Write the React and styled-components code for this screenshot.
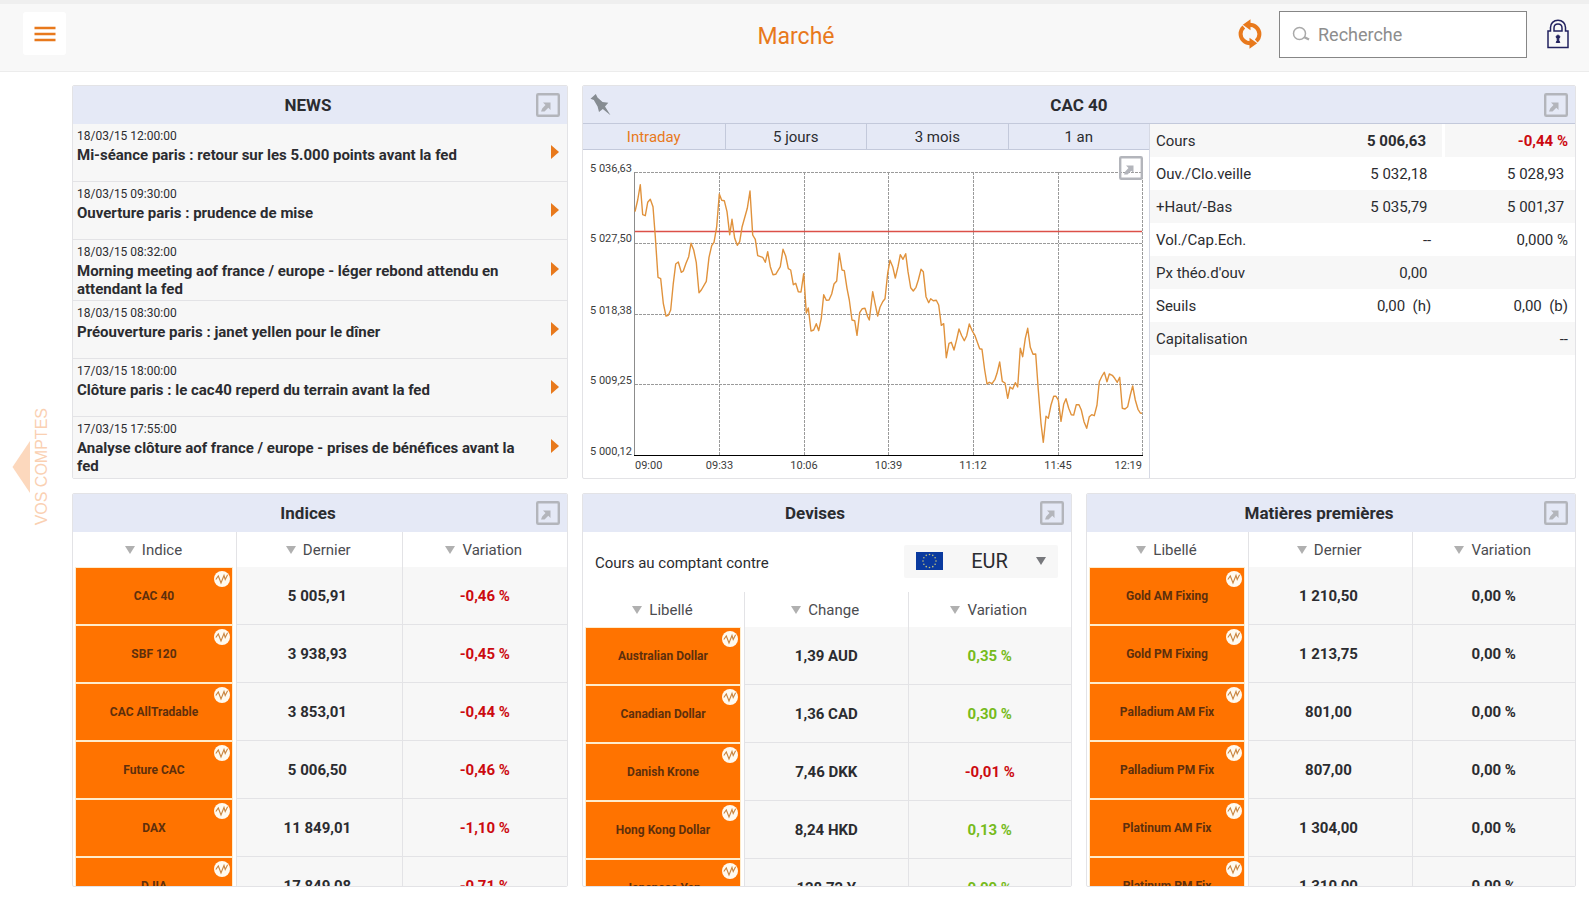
import React, { useState } from "react";
import styled, { createGlobalStyle } from "styled-components";

const GlobalStyle = createGlobalStyle`
  *, *::before, *::after { box-sizing: border-box; }
  html, body { margin: 0; padding: 0; background: #fff; }
  body, button, input, select, table { font-family: Roboto, "Liberation Sans", sans-serif; }
  button { border: 0; padding: 0; background: none; cursor: pointer; }
`;

const c = {
  orange: "#e8791c",
  tile: "#ff7300",
  head: "#e5e9f6",
  headLine: "#c3c9db",
  line: "#e3e3e6",
  soft: "#f7f7f7",
  text: "#2b2c30",
  up: "#76bb1c",
  down: "#cc0a10",
};

/* ---------- page frame ---------- */

const Page = styled.div`
  display: flex;
  flex-direction: column;
  height: 100vh;
  min-height: 640px;
  color: ${c.text};
`;

const TopBar = styled.header`
  display: grid;
  grid-template-columns: 1fr auto 1fr;
  align-items: center;
  flex: none;
  height: 72px;
  padding: 0 20px 4px 23px;
  background: #f8f8f8;
  border-top: 4px solid #efefef;
  border-bottom: 1px solid #ececec;
`;

const MenuButton = styled.button`
  display: grid;
  place-items: center;
  width: 43px;
  height: 43px;
  margin-bottom: 4px;
  background: #fff;
  border-radius: 3px;
`;

const PageTitle = styled.h1`
  margin: 0;
  padding-top: 2px;
  font-size: 23px;
  line-height: 28px;
  font-weight: 400;
  color: ${c.orange};
`;

const Tools = styled.div`
  display: flex;
  justify-content: flex-end;
  align-items: center;
  gap: 17px;
  margin-bottom: 3px;
`;

const IconButton = styled.button`
  display: grid;
  place-items: center;
  flex: none;
`;

const SearchBox = styled.label`
  display: flex;
  align-items: center;
  gap: 7px;
  width: 248px;
  height: 47px;
  margin-right: 3px;
  padding: 0 12px;
  background: #fff;
  border: 1px solid #868686;
`;

const SearchInput = styled.input`
  flex: 1;
  min-width: 0;
  border: 0;
  outline: 0;
  padding: 2px 0 0;
  background: none;
  font-size: 18px;
  line-height: 24px;
  color: ${c.text};
  &::placeholder { color: #8d8d8d; opacity: 1; }
`;

const Body = styled.div`
  display: grid;
  grid-template-columns: 72px minmax(0, 1fr);
  grid-template-rows: minmax(0, 1fr);
  flex: 1;
  min-height: 0;
`;

const Rail = styled.nav`
  display: flex;
  align-items: center;
  padding: 0 0 38px 12px;
`;

const RailButton = styled.button`
  display: flex;
  align-items: center;
  gap: 3px;
  font-family: "Liberation Sans", Arial, sans-serif;
  font-size: 16px;
  line-height: 18px;
  color: #fad0b2;
`;

const RailText = styled.span`
  writing-mode: vertical-rl;
  transform: rotate(180deg);
`;

const Board = styled.main`
  display: grid;
  grid-template-columns: minmax(0, 496fr) minmax(0, 490fr) minmax(0, 490fr);
  grid-template-rows: minmax(0, 1fr) minmax(0, 1fr);
  gap: 14px;
  padding: 13px 13px 13px 0;
`;

/* ---------- panels ---------- */

const PanelBox = styled.section`
  display: flex;
  flex-direction: column;
  grid-column: span ${(p) => p.$span || 1};
  min-height: 0;
  overflow: hidden;
  border: 1px solid ${c.line};
  border-radius: 2px;
  background: #fff;
`;

const PanelHead = styled.header`
  display: flex;
  align-items: center;
  flex: none;
  height: 38px;
  padding: 0 7px;
  background: ${c.head};
  border-bottom: 1px solid ${(p) => (p.$ruled ? c.headLine : c.head)};
`;

const PanelTitle = styled.h2`
  flex: 1;
  margin: 0;
  padding-top: 1px;
  font-size: 17px;
  line-height: 24px;
  font-weight: 700;
  text-align: center;
`;

/* ---------- news ---------- */

const NewsList = styled.ul`
  flex: 1;
  min-height: 0;
  margin: 0;
  padding: 0;
  overflow: hidden;
  list-style: none;
  background: ${c.soft};
`;

const NewsItem = styled.li`
  border-bottom: 1px solid ${c.line};
  &:last-child { border-bottom: 0; }
`;

const NewsLink = styled.a`
  display: flex;
  align-items: center;
  min-height: 57px;
  padding: 4px 8px 2px 4px;
  color: inherit;
  text-decoration: none;
`;

const NewsText = styled.span`
  display: grid;
  gap: 2px;
  flex: 1;
  align-self: flex-start;
  padding-right: 36px;
`;

const NewsDate = styled.time`
  font-size: 12px;
  line-height: 16px;
`;

const NewsTitle = styled.strong`
  font-size: 15px;
  line-height: 18px;
  font-weight: 700;
`;

const NewsCaret = styled.svg`
  flex: none;
  margin-bottom: 4px;
`;

/* ---------- index detail ---------- */

const Detail = styled.div`
  display: grid;
  grid-template-columns: minmax(0, 567fr) minmax(0, 425fr);
  flex: 1;
  min-height: 0;
`;

const ChartSide = styled.div`
  display: flex;
  flex-direction: column;
  min-height: 0;
  border-right: 1px solid #d6d9e4;
`;

const Tabs = styled.div`
  display: grid;
  grid-template-columns: repeat(4, 1fr);
  flex: none;
  height: 26px;
  border-bottom: 1px solid ${c.headLine};
  background: ${c.head};
`;

const Tab = styled.button`
  font-size: 15px;
  line-height: 24px;
  color: ${(p) => (p.$active ? c.orange : c.text)};
  & + & { border-left: 1px solid ${c.headLine}; }
`;

const ChartBox = styled.div`
  position: relative;
  flex: 1;
  min-height: 0;
`;

const ChartSvg = styled.svg`
  display: block;
  width: 100%;
  height: 100%;
  font-size: 11px;
  fill: #3c3c3c;
`;

const ChartExpand = styled.div`
  position: absolute;
  top: 6px;
  right: 6px;
`;

const Stats = styled.table`
  width: 100%;
  align-self: start;
  table-layout: fixed;
  border-collapse: collapse;
  font-size: 15px;
  line-height: 18px;
`;

const StatRow = styled.tr`
  height: 33px;
  &:nth-child(odd) { background: ${c.soft}; }
`;

const StatLabel = styled.th`
  width: 40%;
  padding: 0 0 0 6px;
  font-weight: 400;
  text-align: left;
`;

const StatValue = styled.td`
  width: ${(p) => (p.$last ? "31%" : "29%")};
  padding: 0 ${(p) => (p.$last ? "7px" : "12px")} 0 0;
  border-left: ${(p) => (p.$divided ? "3px solid #fff" : "0")};
  font-weight: ${(p) => (p.$strong ? 700 : 400)};
  color: ${(p) => (p.$down ? c.down : "inherit")};
  text-align: right;
  white-space: pre;
`;

/* ---------- quotes ---------- */

const Scroller = styled.div`
  flex: 1;
  min-height: 0;
  overflow: hidden;
`;

const Quotes = styled.table`
  width: 100%;
  table-layout: fixed;
  border-collapse: separate;
  border-spacing: 0;
`;

const SortHead = styled.th`
  height: 35px;
  padding: 0;
  font-weight: 400;
  &:first-child { width: 33%; }
  & + & { border-left: 1px solid ${c.line}; }
`;

const SortButton = styled.button`
  display: flex;
  justify-content: center;
  align-items: center;
  gap: 7px;
  width: 100%;
  padding-right: 2px;
  font-size: 15px;
  line-height: 20px;
  color: #4b4c50;
`;

const TileCell = styled.td`
  height: 58px;
  padding: 1px 4px 1px 3px;
`;

const Tile = styled.button`
  position: relative;
  display: block;
  width: 100%;
  height: 56px;
  background: ${c.tile};
  font-size: 12px;
  line-height: 16px;
  font-weight: 700;
  color: #5e2f0c;
  box-shadow: 0 0 0 1px #ffeccb;
`;

const TileBadge = styled.span`
  position: absolute;
  top: 3px;
  right: 2px;
  display: block;
  width: 16px;
  height: 16px;
`;

const QuoteCell = styled.td`
  height: 58px;
  padding: 0;
  background: ${c.soft};
  border-left: 1px solid ${c.line};
  border-bottom: 1px solid ${c.line};
  font-size: 15px;
  line-height: 20px;
  font-weight: 700;
  text-align: center;
  white-space: pre;
  color: ${(p) => (p.$tone ? c[p.$tone] : c.text)};
`;

const CurrencyBar = styled.div`
  display: flex;
  justify-content: space-between;
  align-items: center;
  flex: none;
  height: 60px;
  padding: 0 13px 2px 12px;
  font-size: 15px;
  line-height: 20px;
`;

const CurrencyLabel = styled.label`
  padding-top: 3px;
`;

const CurrencyBox = styled.span`
  display: flex;
  align-items: center;
  width: 154px;
  height: 33px;
  padding: 0 12px;
  background: ${c.soft};
  border-radius: 2px;
`;

const CurrencySelect = styled.select`
  flex: 1;
  min-width: 0;
  appearance: none;
  border: 0;
  outline: 0;
  padding: 0;
  background: none;
  font-size: 20px;
  line-height: 28px;
  color: ${c.text};
  text-align: center;
  text-align-last: center;
`;

/* ---------- icons ---------- */

const MenuIcon = () => (
  <svg width="22" height="18" viewBox="0 0 22 18" aria-hidden="true">
    <path d="M0.5 3H21.5M0.5 9H21.5M0.5 15H21.5" stroke={c.orange} strokeWidth="2.4" />
  </svg>
);

const RefreshIcon = () => (
  <svg width="24" height="30" viewBox="0 0 24 30" aria-hidden="true">
    <g fill="none" stroke={c.orange} strokeWidth="4">
      <path d="M11.5 5.7C17 5.7 21.4 10 21.4 15C21.4 18 20.2 20.3 18.2 22" />
      <path d="M12.5 24.3C7 24.3 2.6 20 2.6 15C2.6 12 3.800 9.700 5.800 8" />
    </g>
    <path d="M12.500 0.300V11.300L4.800 5.800ZM11.500 29.700V18.700L19.200 24.200Z" fill={c.orange} />
  </svg>
);

const SearchIcon = () => (
  <svg width="19" height="16" viewBox="0 0 19 16" fill="none" stroke="#a9a9a9" aria-hidden="true">
    <circle cx="7.500" cy="7.500" r="6" strokeWidth="1.500" />
    <path d="M12 11L17 13.500" strokeWidth="2.400" />
  </svg>
);

const LockIcon = () => (
  <svg width="22" height="30" viewBox="0 0 22 30" fill="none" stroke="#22225f" strokeWidth="1.500" aria-hidden="true">
    <path d="M1 28.500V12H3.500V8.500C3.500 4.500 6.500 1.200 11 1.200S18.500 4.500 18.500 8.500V12H21V28.500Z" />
    <path d="M7 12V9C7 6.500 8.500 5 11 5S15 6.500 15 9V12Z" />
    <path d="M11 16.200C9.900 16.200 9.200 17 9.200 17.900C9.200 18.600 9.600 19.200 10.200 19.500V21.500L9.200 23.500H12.800L11.800 21.500V19.500C12.400 19.200 12.800 18.600 12.800 17.900C12.800 17 12.100 16.200 11 16.200Z" fill="#22225f" strokeWidth="1" />
  </svg>
);

const PinIcon = () => (
  <svg width="24" height="24" viewBox="0 0 24 24" fill="#868c92" aria-hidden="true">
    <path d="M0.500 5.800L5.800 1L7.500 4.500L12.500 9L18.300 9.700L15 13.600L20.500 22.200L12.800 15.900L9 19L7.600 13.500L3.800 7Z" />
  </svg>
);

const ExpandIcon = () => (
  <svg width="24" height="24" viewBox="0 0 24 24" fill="none" aria-hidden="true">
    <rect x="1.200" y="1.200" width="21.600" height="21.600" rx="1" stroke="#b3b5bb" strokeWidth="2.400" />
    <path d="M7 9.500H14.500V17L12.300 14.800L8.500 18.500L5 18.500L6.200 15.600L9.500 12Z" fill="#b3b5bb" />
  </svg>
);

const CaretRight = () => (
  <NewsCaret width="8" height="14" viewBox="0 0 8 14" aria-hidden="true">
    <path d="M0 0L8 7L0 14Z" fill={c.orange} />
  </NewsCaret>
);

const CaretDown = ({ color = "#b0b0b0" }) => (
  <svg width="10" height="8" viewBox="0 0 10 8" aria-hidden="true">
    <path d="M0 0H10L5 8Z" fill={color} />
  </svg>
);

const RailArrow = () => (
  <svg width="18" height="52" viewBox="0 0 18 52" aria-hidden="true">
    <path d="M18 0V52L0.500 26Z" fill="#fcd8bd" />
  </svg>
);

const BadgeIcon = () => (
  <svg width="16" height="16" viewBox="0 0 16 16" aria-hidden="true">
    <circle cx="8" cy="8" r="8" fill="#fffaf0" />
    <path d="M1.800 8.500L4.300 5L7 12L10 4.500L11.200 8.500L13.600 3.800" fill="none" stroke="#c9853f" strokeWidth="1.100" />
  </svg>
);

const EuFlag = () => (
  <svg width="27" height="18" viewBox="0 0 27 18" role="img" aria-label="Union européenne">
    <rect width="27" height="18" fill="#0a3a9f" />
    {Array.from({ length: 12 }, (_, i) => (
      <circle
        key={i}
        cx={13.5 + 6.5 * Math.sin((i * Math.PI) / 6)}
        cy={9 - 6.5 * Math.cos((i * Math.PI) / 6)}
        r="0.8"
        fill="#c2c27c"
      />
    ))}
  </svg>
);

/* ---------- data ---------- */

const news = [
  ["18/03/15 12:00:00", "Mi-séance paris : retour sur les 5.000 points avant la fed"],
  ["18/03/15 09:30:00", "Ouverture paris : prudence de mise"],
  ["18/03/15 08:32:00", "Morning meeting aof france / europe - léger rebond attendu en attendant la fed"],
  ["18/03/15 08:30:00", "Préouverture paris : janet yellen pour le dîner"],
  ["17/03/15 18:00:00", "Clôture paris : le cac40 reperd du terrain avant la fed"],
  ["17/03/15 17:55:00", "Analyse clôture aof france / europe - prises de bénéfices avant la fed"],
];

const stats = [
  { label: "Cours", a: "5 006,63 ", b: "-0,44 %", strong: true },
  { label: "Ouv./Clo.veille", a: "5 032,18 ", b: "5 028,93 " },
  { label: "+Haut/-Bas", a: "5 035,79 ", b: "5 001,37 " },
  { label: "Vol./Cap.Ech.", a: "--", b: "0,000 %" },
  { label: "Px théo.d'ouv", a: "0,00 ", b: "" },
  { label: "Seuils", a: "0,00  (h)", b: "0,00  (b)" },
  { label: "Capitalisation", a: "", b: "--" },
];

const indices = [
  ["CAC 40", "5 005,91 ", "-0,46 %"],
  ["SBF 120", "3 938,93 ", "-0,45 %"],
  ["CAC AllTradable", "3 853,01 ", "-0,44 %"],
  ["Future CAC", "5 006,50 ", "-0,46 %"],
  ["DAX", "11 849,01 ", "-1,10 %"],
  ["DJIA", "17 849,08 ", "-0,71 %"],
];

const currencies = [
  ["Australian Dollar", "1,39 AUD", "0,35 %"],
  ["Canadian Dollar", "1,36 CAD", "0,30 %"],
  ["Danish Krone", "7,46 DKK", "-0,01 %"],
  ["Hong Kong Dollar", "8,24 HKD", "0,13 %"],
  ["Japanese Yen", "128,72 Y", "0,09 %"],
];

const commodities = [
  ["Gold AM Fixing", "1 210,50 ", "0,00 %"],
  ["Gold PM Fixing", "1 213,75 ", "0,00 %"],
  ["Palladium AM Fix", "801,00 ", "0,00 %"],
  ["Palladium PM Fix", "807,00 ", "0,00 %"],
  ["Platinum AM Fix", "1 304,00 ", "0,00 %"],
  ["Platinum PM Fix", "1 310,00 ", "0,00 %"],
];

const periods = ["Intraday", "5 jours", "3 mois", "1 an"];

const yTicks = [
  [22.5, "5 036,63"],
  [93, "5 027,50"],
  [164.5, "5 018,38"],
  [234.5, "5 009,25"],
  [305.5, "5 000,12"],
];

const xTicks = [
  [52, "09:00", "start"],
  [136.5, "09:33", "middle"],
  [221, "10:06", "middle"],
  [305.5, "10:39", "middle"],
  [390, "11:12", "middle"],
  [475, "11:45", "middle"],
  [559, "12:19", "end"],
];

const series =
  "52,61.7 54.7,50 57.3,34.7 59.7,64.7 62.3,65.7 64.7,52.3 67.3,49.3 70,56.7 72.3,86.7 75,127.3 77.7,128.7 80.3,153.3 83,166 85.3,165.3 87.7,160 90.3,133.3 92.7,114 95.3,112 98.3,122.3 100.3,121 103,113.3 105.7,106.7 108,93.3 110.7,100 113.3,112.7 116,142.7 118.3,140 123.3,131.3 126,107.3 128.7,95.7 131,92.3 133.7,76.7 136.3,44 138.7,50.3 141.3,50.7 144,61.7 146.7,84.7 149,69.3 151.7,88.3 154.3,95.3 156.7,91.7 159,77.3 164.3,58.3 167,41 169.7,85 172.3,89.3 174.7,105.7 179.7,107.3 182.3,112.3 184.7,101.7 187.3,116.7 190,124.7 192.7,124.3 197.3,116.7 200,99.3 202.7,106 205.3,118.7 207.7,120 210.3,134.7 212.7,133.3 215.3,141.7 218,142 220.7,123.7 223.3,163 225.3,158 228,181 230.7,180 233.3,173.7 235.7,180.7 238.3,168.3 240.7,144.7 243.3,150.3 246,150 248.7,144 251,134 253.7,131 256.3,103.3 259,120 261.3,120.7 264,138.3 266.3,150 269,170 271.7,170.7 274,185.3 276.7,162.7 279.3,158.7 282,158.3 284.7,166.7 286.3,170 289.7,141.7 292,153.3 294.7,166 297,157.3 299.7,151.7 302,148.7 304.7,123.3 307,110.3 309.7,116.7 312.3,128 315,116.7 317.3,104.7 320,109.3 322.7,103.7 325,121.7 327.7,137.7 330.3,141 333,137.3 335.3,130 338,119.3 340.3,121.7 343,146.7 345.7,152.7 347.7,148.7 350.3,150.7 353.3,150.3 355.7,155 358.3,175.3 360.7,173.7 363.3,207.7 366,193.3 368.3,192.3 371,200 373.7,189.3 376,179 378.7,185.7 381.3,190.7 383.7,185.7 386.3,174 389.3,181 392,185.7 396.7,198.7 399,199.3 401.7,220 404,234 406.3,232.3 409,233.7 412,229.3 414,223.3 416.7,212 419.3,231.3 422,233 424.7,248.3 427,237 429.7,239 432.3,232.7 434.7,237 437.3,198.3 439.7,206.7 442.3,188.3 444.7,178.3 447.3,197.3 450,204.3 452.7,204 455.3,240 458,273.3 460.3,292.3 463,266.3 465.3,268.3 468,255 470.7,246.3 473,246.3 475.3,250 478,271.3 480.7,254.3 483,248.7 485.7,258.3 488.3,264.7 490.7,265 493.3,254.7 496,254.7 498.3,260 501,271.7 503.7,278.3 506.3,266.7 508.7,264.7 511.3,265.7 514,255 516.3,231.7 519,226 521.3,222.3 524,231.7 526.3,224 529.3,225.3 531.7,228.3 534.3,232.3 536.7,227.3 539.3,258.3 542,259 544.7,256.7 547.3,245 549.7,236 552.3,250 555,259.3 557.3,263 559,263.3";

/* ---------- components ---------- */

function ExpandButton({ label }) {
  return (
    <IconButton type="button" aria-label={`Agrandir ${label}`}>
      <ExpandIcon />
    </IconButton>
  );
}

function Panel({ title, span, ruled, lead, children }) {
  return (
    <PanelBox $span={span} aria-label={title}>
      <PanelHead $ruled={ruled}>
        {lead}
        <PanelTitle>{title}</PanelTitle>
        <ExpandButton label={title} />
      </PanelHead>
      {children}
    </PanelBox>
  );
}

function PriceChart() {
  return (
    <ChartSvg viewBox="0 0 566 328" role="img" aria-label="Cours intraday du CAC 40">
      <g stroke="#9a9a9a" strokeWidth="1" strokeDasharray="3 1">
        {yTicks.slice(0, 4).map(([y]) => (
          <path key={y} d={`M52 ${Math.floor(y) + 0.5}H559`} />
        ))}
        {xTicks.slice(1).map(([x]) => (
          <path key={x} d={`M${Math.floor(x) + 0.5} 22V305`} />
        ))}
      </g>
      <path d="M51.500 22V305" stroke="#8c8c8c" />
      <path d="M51 305.500H560" stroke="#000" />
      <path d="M52 81.500H559" stroke="#dc5048" strokeWidth="1.500" />
      <polyline points={series} fill="none" stroke="#e0923c" strokeWidth="1.400" strokeLinejoin="round" />
      {yTicks.map(([y, label]) => (
        <text key={label} x="49" y={y - 1} textAnchor="end">
          {label}
        </text>
      ))}
      {xTicks.map(([x, label, anchor]) => (
        <text key={label} x={x} y="319" textAnchor={anchor}>
          {label}
        </text>
      ))}
    </ChartSvg>
  );
}

function toneOf(variation) {
  if (variation.startsWith("-")) return "down";
  return variation.startsWith("0,00") ? undefined : "up";
}

function QuoteTable({ columns, rows }) {
  return (
    <Scroller>
      <Quotes>
        <thead>
          <tr>
            {columns.map((name) => (
              <SortHead key={name} scope="col">
                <SortButton type="button">
                  <CaretDown />
                  {name}
                </SortButton>
              </SortHead>
            ))}
          </tr>
        </thead>
        <tbody>
          {rows.map(([name, last, variation]) => (
            <tr key={name}>
              <TileCell>
                <Tile type="button">
                  {name}
                  <TileBadge>
                    <BadgeIcon />
                  </TileBadge>
                </Tile>
              </TileCell>
              <QuoteCell>{last}</QuoteCell>
              <QuoteCell $tone={toneOf(variation)}>{variation}</QuoteCell>
            </tr>
          ))}
        </tbody>
      </Quotes>
    </Scroller>
  );
}

export default function App() {
  const [period, setPeriod] = useState("Intraday");
  return (
    <Page>
      <GlobalStyle />
      <TopBar>
        <MenuButton type="button" aria-label="Menu">
          <MenuIcon />
        </MenuButton>
        <PageTitle>Marché</PageTitle>
        <Tools>
          <IconButton type="button" aria-label="Actualiser">
            <RefreshIcon />
          </IconButton>
          <SearchBox>
            <SearchIcon />
            <SearchInput type="text" placeholder="Recherche" aria-label="Recherche" />
          </SearchBox>
          <IconButton type="button" aria-label="Connexion">
            <LockIcon />
          </IconButton>
        </Tools>
      </TopBar>
      <Body>
        <Rail>
          <RailButton type="button">
            <RailArrow />
            <RailText>VOS COMPTES</RailText>
          </RailButton>
        </Rail>
        <Board>
          <Panel title="NEWS">
            <NewsList>
              {news.map(([date, title]) => (
                <NewsItem key={date}>
                  <NewsLink href="#news">
                    <NewsText>
                      <NewsDate>{date}</NewsDate>
                      <NewsTitle>{title}</NewsTitle>
                    </NewsText>
                    <CaretRight />
                  </NewsLink>
                </NewsItem>
              ))}
            </NewsList>
          </Panel>
          <Panel
            title="CAC 40"
            span={2}
            ruled
            lead={
              <IconButton type="button" aria-label="Épingler">
                <PinIcon />
              </IconButton>
            }
          >
            <Detail>
              <ChartSide>
                <Tabs>
                  {periods.map((name) => (
                    <Tab key={name} type="button" $active={name === period} onClick={() => setPeriod(name)}>
                      {name}
                    </Tab>
                  ))}
                </Tabs>
                <ChartBox>
                  <PriceChart />
                  <ChartExpand>
                    <ExpandButton label="le graphique" />
                  </ChartExpand>
                </ChartBox>
              </ChartSide>
              <Stats>
                <tbody>
                  {stats.map((row) => (
                    <StatRow key={row.label}>
                      <StatLabel scope="row">{row.label}</StatLabel>
                      <StatValue $strong={row.strong}>{row.a}</StatValue>
                      <StatValue $last $strong={row.strong} $divided={row.strong} $down={row.strong}>
                        {row.b}
                      </StatValue>
                    </StatRow>
                  ))}
                </tbody>
              </Stats>
            </Detail>
          </Panel>
          <Panel title="Indices">
            <QuoteTable columns={["Indice", "Dernier", "Variation"]} rows={indices} />
          </Panel>
          <Panel title="Devises">
            <CurrencyBar>
              <CurrencyLabel htmlFor="currency">Cours au comptant contre</CurrencyLabel>
              <CurrencyBox>
                <EuFlag />
                <CurrencySelect id="currency" defaultValue="EUR">
                  <option>EUR</option>
                  <option>USD</option>
                </CurrencySelect>
                <CaretDown color="#77787c" />
              </CurrencyBox>
            </CurrencyBar>
            <QuoteTable columns={["Libellé", "Change", "Variation"]} rows={currencies} />
          </Panel>
          <Panel title="Matières premières">
            <QuoteTable columns={["Libellé", "Dernier", "Variation"]} rows={commodities} />
          </Panel>
        </Board>
      </Body>
    </Page>
  );
}
